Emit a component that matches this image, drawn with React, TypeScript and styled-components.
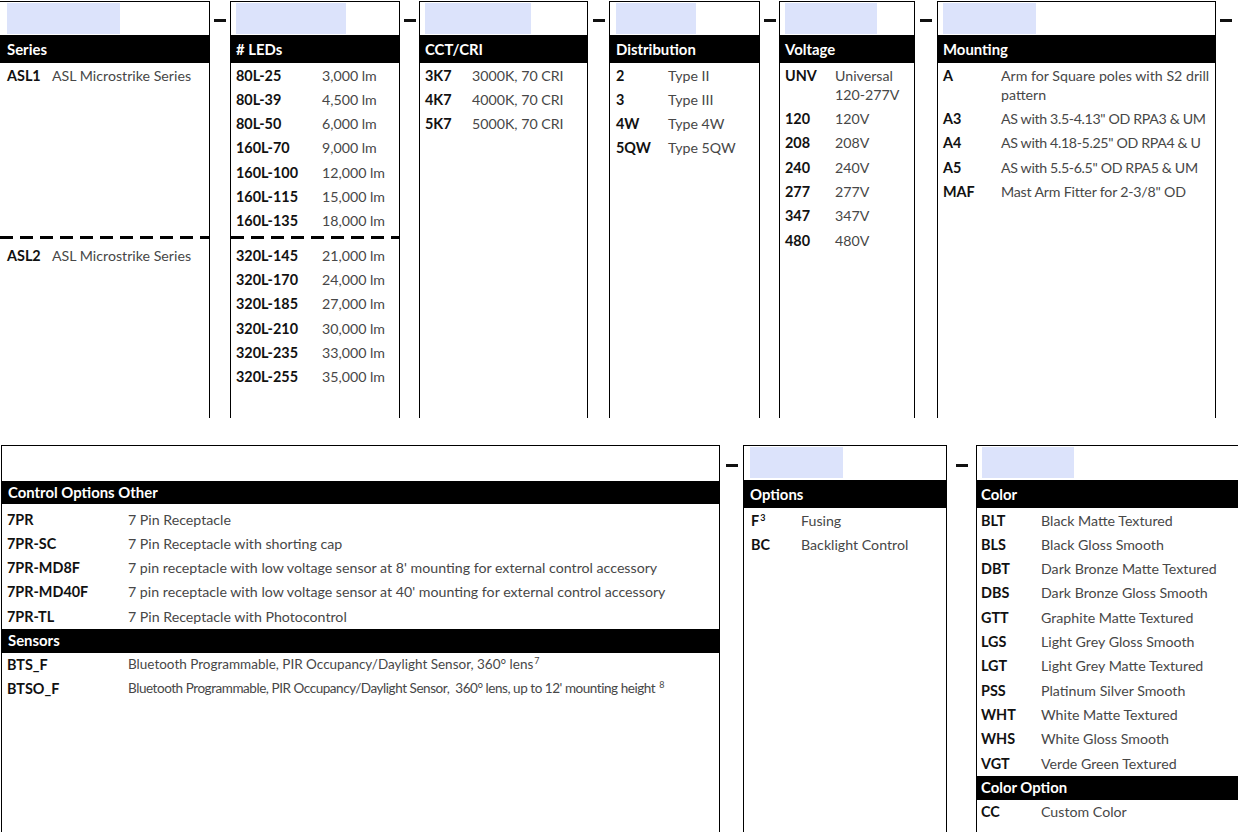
import React from "react";
import styled, { createGlobalStyle } from "styled-components";

const Global = createGlobalStyle`
  html, body { margin: 0; padding: 0; background: #fff; }
  body { font-family: Lato, "Open Sans", Arial, sans-serif; }
`;

const Page = styled.div`
  width: 1242px;
  height: 832px;
  overflow: hidden;
  background: #fff;
  display: flex;
  flex-direction: column;
`;

const Band = styled.div<{ $top: number; $gap: number; $left: number }>`
  display: flex;
  align-items: flex-start;
  padding-top: ${(p) => p.$top}px;
  margin-top: ${(p) => p.$gap}px;
  padding-left: ${(p) => p.$left}px;
  flex: none;
`;

const Box = styled.section<{ $w: number; $h: number; $bl: boolean; $br: boolean }>`
  flex: none;
  box-sizing: border-box;
  width: ${(p) => p.$w}px;
  height: ${(p) => p.$h}px;
  border-top: 1px solid #000;
  border-left: ${(p) => (p.$bl ? "1px solid #000" : "none")};
  border-right: ${(p) => (p.$br ? "1px solid #000" : "none")};
  display: flex;
  flex-direction: column;
  overflow: hidden;
`;

const Slot = styled.div<{ $x: number; $w: number; $gap: number }>`
  flex: none;
  height: 31px;
  width: ${(p) => p.$w}px;
  margin: 1px 0 ${(p) => p.$gap}px ${(p) => p.$x}px;
  background: ${(p) => (p.$w ? "#dce3fb" : "transparent")};
`;

const Head = styled.h3<{ $pad: number; $h: number }>`
  flex: none;
  margin: 0;
  height: ${(p) => p.$h}px;
  line-height: ${(p) => p.$h}px;
  padding-left: ${(p) => p.$pad}px;
  background: #000;
  color: #fff;
  font-size: 14.9px;
  font-weight: 700;
  white-space: nowrap;
`;

const SubHead = styled.h4<{ $pad: number }>`
  margin: 0;
  height: 24px;
  line-height: 23px;
  padding-left: ${(p) => p.$pad}px;
  background: #000;
  color: #fff;
  font-size: 14.9px;
  font-weight: 700;
  white-space: nowrap;
`;

const List = styled.div<{ $code: number; $pad: number; $top?: number }>`
  --code: ${(p) => p.$code}px;
  --pad: ${(p) => p.$pad}px;
  padding-top: ${(p) => p.$top ?? 0}px;
`;

const Group = styled.div<{ $rows?: number }>`
  min-height: ${(p) => (p.$rows ? p.$rows * 24.33 : 0)}px;
`;

const Row = styled.div`
  display: grid;
  grid-template-columns: var(--code) 1fr;
  padding: 2.5px 2px 2.5px var(--pad);
  line-height: 19.33px;
  font-size: 14.2px;
`;

const Code = styled.span`
  font-size: 14.4px;
  font-weight: 700;
  color: #111;
  white-space: nowrap;
`;

const Desc = styled.span<{ $small?: boolean; $ls: number }>`
  color: #474747;
  font-size: ${(p) => (p.$small ? "13.5px" : "14.2px")};
  letter-spacing: ${(p) => p.$ls}px;
  white-space: nowrap;
`;

const Sup = styled.sup`
  font-size: 9px;
  line-height: 0;
  vertical-align: 5px;
  margin-left: 1px;
  letter-spacing: 0;
`;

const Dashed = styled.div`
  height: 3px;
  margin: 3px 0 4px;
  background: repeating-linear-gradient(90deg, #000 0 13px, transparent 13px 20px);
`;

const Sep = styled.div<{ $w: number; $top: number }>`
  flex: none;
  width: ${(p) => p.$w}px;
  display: flex;
  justify-content: center;
  padding-top: ${(p) => p.$top}px;
`;

const Dash = styled.span`
  display: block;
  width: 12px;
  height: 3px;
  background: #111;
`;

interface ColumnProps {
  w: number;
  h: number;
  title: string;
  pad: number;
  slotX: number;
  slotW: number;
  slotGap: number;
  headH?: number;
  bl?: boolean;
  br?: boolean;
  children: React.ReactNode;
}

function Column({ w, h, title, pad, slotX, slotW, slotGap, headH = 28, bl = true, br = true, children }: ColumnProps) {
  return (
    <Box $w={w} $h={h} $bl={bl} $br={br}>
      <Slot $x={slotX} $w={slotW} $gap={slotGap} />
      <Head $pad={pad} $h={headH}>{title}</Head>
      {children}
    </Box>
  );
}

type Item = [React.ReactNode, React.ReactNode, number?];

const Rows = ({ items, small }: { items: Item[]; small?: boolean }) => (
  <>
    {items.map(([c, d, ls], i) => (
      <Row key={i}>
        <Code>{c}</Code>
        <Desc $small={small} $ls={ls ?? 0}>{d}</Desc>
      </Row>
    ))}
  </>
);

const leds1: Item[] = [
  ["80L-25", "3,000 lm"],
  ["80L-39", "4,500 lm"],
  ["80L-50", "6,000 lm"],
  ["160L-70", "9,000 lm"],
  ["160L-100", "12,000 lm"],
  ["160L-115", "15,000 lm"],
  ["160L-135", "18,000 lm"],
];
const leds2: Item[] = [
  ["320L-145", "21,000 lm"],
  ["320L-170", "24,000 lm"],
  ["320L-185", "27,000 lm"],
  ["320L-210", "30,000 lm"],
  ["320L-235", "33,000 lm"],
  ["320L-255", "35,000 lm"],
];
const cct: Item[] = [
  ["3K7", "3000K, 70 CRI"],
  ["4K7", "4000K, 70 CRI"],
  ["5K7", "5000K, 70 CRI"],
];
const dist: Item[] = [
  ["2", "Type II"],
  ["3", "Type III"],
  ["4W", "Type 4W"],
  ["5QW", "Type 5QW"],
];
const volt: Item[] = [
  ["UNV", <>Universal<br />120-277V</>],
  ["120", "120V"],
  ["208", "208V"],
  ["240", "240V"],
  ["277", "277V"],
  ["347", "347V"],
  ["480", "480V"],
];
const mount: Item[] = [
  ["A", <>Arm for Square poles with S2 drill<br />pattern</>],
  ["A3", "AS with 3.5-4.13\" OD RPA3 & UM", -0.35],
  ["A4", "AS with 4.18-5.25\" OD RPA4 & U", -0.35],
  ["A5", "AS with 5.5-6.5\" OD RPA5 & UM", -0.35],
  ["MAF", "Mast Arm Fitter for 2-3/8\" OD", -0.2],
];
const control: Item[] = [
  ["7PR", "7 Pin Receptacle"],
  ["7PR-SC", "7 Pin Receptacle with shorting cap"],
  ["7PR-MD8F", "7 pin receptacle with low voltage sensor at 8' mounting for external control accessory"],
  ["7PR-MD40F", "7 pin receptacle with low voltage sensor at 40' mounting for external control accessory"],
  ["7PR-TL", "7 Pin Receptacle with Photocontrol"],
];
const sensors: Item[] = [
  ["BTS_F", <>Bluetooth Programmable, PIR Occupancy/Daylight Sensor, 360° lens<Sup>7</Sup></>],
  ["BTSO_F", <>Bluetooth Programmable, PIR Occupancy/Daylight Sensor,&nbsp; 360° lens, up to 12' mounting height <Sup>8</Sup></>, -0.45],
];
const options: Item[] = [
  [<>F<Sup>3</Sup></>, "Fusing"],
  ["BC", "Backlight Control"],
];
const colors: Item[] = [
  ["BLT", "Black Matte Textured"],
  ["BLS", "Black Gloss Smooth"],
  ["DBT", "Dark Bronze Matte Textured"],
  ["DBS", "Dark Bronze Gloss Smooth"],
  ["GTT", "Graphite Matte Textured"],
  ["LGS", "Light Grey Gloss Smooth"],
  ["LGT", "Light Grey Matte Textured"],
  ["PSS", "Platinum Silver Smooth"],
  ["WHT", "White Matte Textured"],
  ["WHS", "White Gloss Smooth"],
  ["VGT", "Verde Green Textured"],
];

export default function App() {
  const TH = 417;
  const BH = 387;
  return (
    <Page>
      <Global />
      <Band $top={1} $gap={0} $left={0}>
        <Column w={210} h={TH} title="Series" pad={7} slotX={7} slotW={113} slotGap={1} bl={false}>
          <List $code={45} $pad={7}>
            <Group $rows={7}>
              <Rows items={[["ASL1", "ASL Microstrike Series"]]} />
            </Group>
            <Dashed />
            <Rows items={[["ASL2", "ASL Microstrike Series"]]} />
          </List>
        </Column>
        <Sep $w={20} $top={18}><Dash /></Sep>
        <Column w={170} h={TH} title="# LEDs" pad={5} slotX={5} slotW={110} slotGap={1}>
          <List $code={86} $pad={5}>
            <Group $rows={7}>
              <Rows items={leds1} />
            </Group>
            <Dashed />
            <Rows items={leds2} />
          </List>
        </Column>
        <Sep $w={19} $top={18}><Dash /></Sep>
        <Column w={169} h={TH} title="CCT/CRI" pad={5} slotX={5} slotW={106} slotGap={1}>
          <List $code={47} $pad={5}>
            <Rows items={cct} />
          </List>
        </Column>
        <Sep $w={21} $top={18}><Dash /></Sep>
        <Column w={151} h={TH} title="Distribution" pad={6} slotX={6} slotW={80} slotGap={1}>
          <List $code={52} $pad={6}>
            <Rows items={dist} />
          </List>
        </Column>
        <Sep $w={19} $top={18}><Dash /></Sep>
        <Column w={136} h={TH} title="Voltage" pad={5} slotX={5} slotW={92} slotGap={1}>
          <List $code={50} $pad={5}>
            <Rows items={volt} />
          </List>
        </Column>
        <Sep $w={22} $top={18}><Dash /></Sep>
        <Column w={279} h={TH} title="Mounting" pad={5} slotX={5} slotW={93} slotGap={1}>
          <List $code={58} $pad={5}>
            <Rows items={mount} />
          </List>
        </Column>
        <Sep $w={20} $top={18}><Dash /></Sep>
      </Band>

      <Band $top={0} $gap={27} $left={1}>
        <Column w={719} h={BH} title="Control Options Other" pad={6} slotX={0} slotW={0} slotGap={3} headH={23}>
          <List $code={121} $pad={5} $top={3}>
            <Rows items={control} />
            <SubHead $pad={6}>Sensors</SubHead>
            <Rows items={sensors} small />
          </List>
        </Column>
        <Sep $w={23} $top={19}><Dash /></Sep>
        <Column w={204} h={BH} title="Options" pad={6} slotX={6} slotW={93} slotGap={2}>
          <List $code={50} $pad={7}>
            <Rows items={options} />
          </List>
        </Column>
        <Sep $w={29} $top={19}><Dash /></Sep>
        <Column w={262} h={BH} title="Color" pad={4} slotX={5} slotW={92} slotGap={2} br={false}>
          <List $code={60} $pad={4}>
            <Rows items={colors} />
            <SubHead $pad={4}>Color Option</SubHead>
            <Rows items={[["CC", "Custom Color"]]} />
          </List>
        </Column>
      </Band>
    </Page>
  );
}
